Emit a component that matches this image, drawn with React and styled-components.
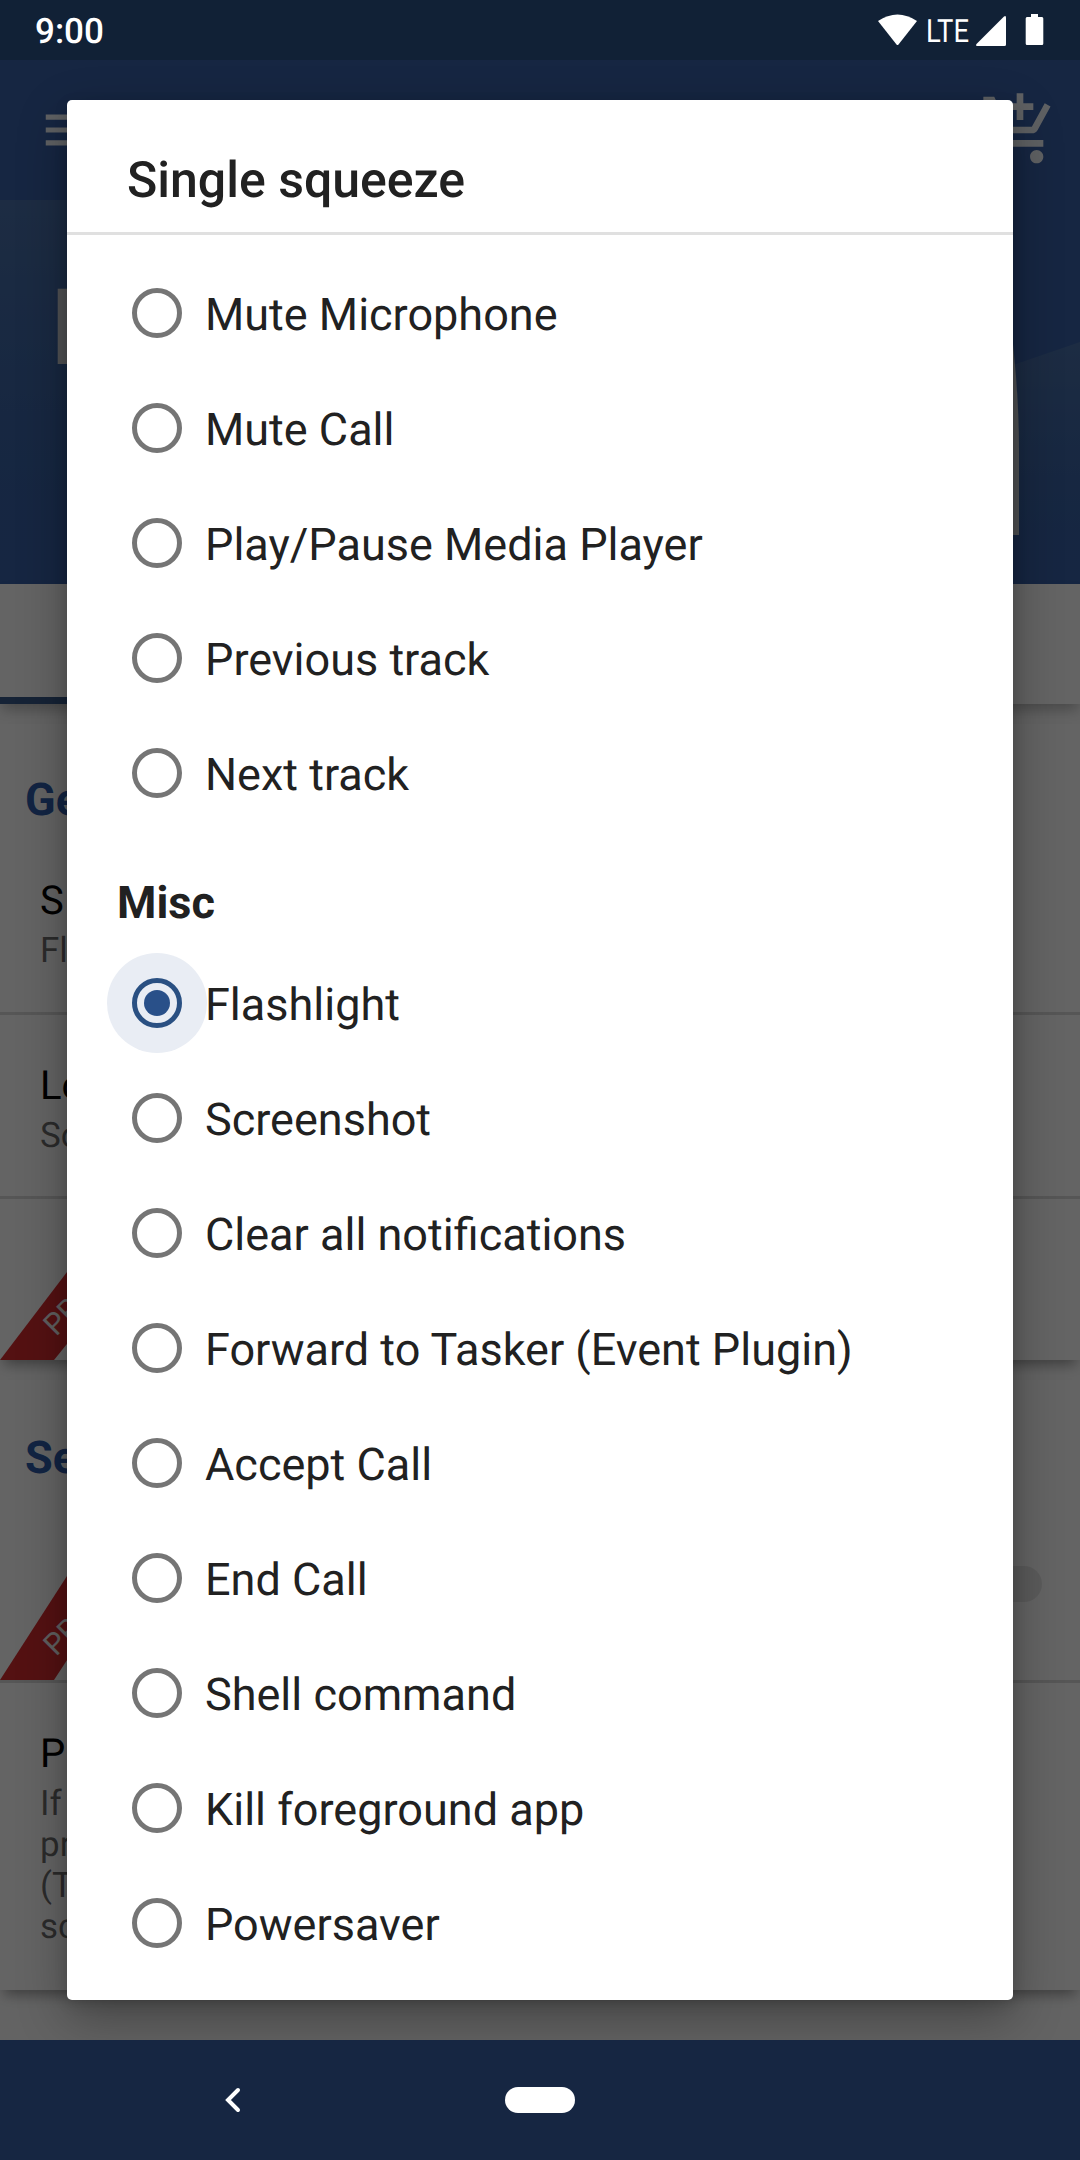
import { useState } from "react";
import styled, { createGlobalStyle } from "styled-components";
import { MdAddShoppingCart, MdMenu } from "react-icons/md";

const GlobalStyle = createGlobalStyle`
    * {
        box-sizing: border-box;
    }

    body {
        margin: 0;
        font-family: Roboto, "Liberation Sans", sans-serif;
        background: #162642;
        text-rendering: geometricPrecision;
    }
`;

const Phone = styled.div`
    display: flex;
    flex-direction: column;
    width: 1080px;
    height: 2160px;
    overflow: hidden;
`;

const StatusBar = styled.header`
    display: flex;
    flex: none;
    height: 60px;
    align-items: center;
    justify-content: space-between;
    padding: 0 36px 0 35px;
    background: #112136;
    color: #ffffff;
`;

const Clock = styled.span`
    font-size: 35px;
    line-height: 60px;
    font-weight: 500;
    padding-top: 3px;
`;

const StatusIcons = styled.svg`
    display: block;
    width: 168px;
    height: 60px;
    fill: #ffffff;
    font-family: Roboto, sans-serif;
    font-size: 32px;
`;

const Stage = styled.div`
    position: relative;
    flex: 1;
    overflow: hidden;
    background: #f8f8f8;
`;

const AppBar = styled.div`
    display: flex;
    height: 140px;
    align-items: center;
    justify-content: space-between;
    padding: 0 20px 0 38px;
    background: #375fa5;
    color: #eef2f8;
`;

const Banner = styled.div`
    display: flex;
    position: relative;
    height: 384px;
    padding: 66px 0 0 49px;
    background: #375fa5;
    color: #cdd0d4;
`;

const BannerArt = styled.svg`
    position: absolute;
    inset: 0;
    width: 1080px;
    height: 384px;
`;

const BannerTitle = styled.div`
    position: relative;
    font-size: 106px;
    line-height: 124px;
`;

const Tabs = styled.div`
    position: relative;
    display: flex;
    height: 120px;
    background: #fafafa;
    box-shadow: 0 8px 12px -2px rgba(0, 0, 0, 0.25);
`;

const ActiveTab = styled.div`
    width: 540px;
    border-bottom: 7px solid #375887;
`;

const Section = styled.section`
    margin-top: 20px;
    background: #fafafa;
    box-shadow: 0 9px 12px -4px rgba(0, 0, 0, 0.35);
`;

const SectionTitle = styled.h2`
    height: ${props => props.$height}px;
    margin: 0;
    padding: ${props => props.$height - 57}px 0 0 25px;
    color: #2d5ba8;
    font-size: 45px;
    line-height: 53px;
    font-weight: 700;
`;

const Setting = styled.div`
    display: flex;
    height: ${props => props.$height}px;
    justify-content: ${props => (props.$end ? "flex-end" : "flex-start")};
    align-items: ${props => (props.$end ? "center" : "flex-start")};
    border-bottom: ${props => (props.$last ? "none" : "3px solid #d8d8d8")};
`;

const SettingText = styled.div`
    padding: 47px 0 0 40px;
`;

const SettingName = styled.div`
    color: #000000;
    font-size: 40px;
    line-height: 48px;
`;

const SettingSummary = styled.div`
    padding-top: 5px;
    color: rgba(0, 0, 0, 0.58);
    font-size: 35px;
    line-height: 41px;
    white-space: pre-line;
`;

const Ribbon = styled.svg`
    display: block;
    width: 160px;
    height: 100%;
    margin-right: auto;
    fill: #d22b2e;

    text {
        fill: #eeeeee;
        font-family: Roboto, sans-serif;
        font-size: 30px;
    }
`;

const Toggle = styled.div`
    width: 90px;
    height: 36px;
    margin-right: 38px;
    border-radius: 18px;
    background: #e4e4e4;
`;

const Scrim = styled.div`
    position: absolute;
    inset: 0;
    padding: 40px 67px;
    background: rgba(0, 0, 0, 0.6);
`;

const Dialog = styled.div`
    height: 1900px;
    border-radius: 5px;
    background: #ffffff;
    color: #212121;
    box-shadow: 0 18px 50px rgba(0, 0, 0, 0.32), 0 4px 14px rgba(0, 0, 0, 0.12);
`;

const DialogTitle = styled.h1`
    height: 135px;
    margin: 0;
    padding: 52px 60px 0;
    border-bottom: 3px solid #e0e0e0;
    font-size: 50px;
    line-height: 58px;
    font-weight: 500;
`;

const Options = styled.div`
    display: flex;
    flex-direction: column;
    padding: 20px 50px;
`;

const GroupName = styled.div`
    height: 115px;
    padding-top: 46px;
    font-size: 45px;
    line-height: 53px;
    font-weight: 700;
`;

const Option = styled.div`
    display: flex;
    height: 115px;
    align-items: center;
    cursor: pointer;
`;

const RadioArea = styled.div`
    display: flex;
    flex: none;
    width: 100px;
    height: 100px;
    margin: 0 -2px 0 -10px;
    align-items: center;
    justify-content: center;
    border-radius: 50%;
    background: ${props => (props.$checked ? "#e9edf4" : "transparent")};
`;

const Radio = styled.div`
    display: flex;
    width: 50px;
    height: 50px;
    align-items: center;
    justify-content: center;
    border: 5px solid ${props => (props.$checked ? "#2a5082" : "#757575")};
    border-radius: 50%;
`;

const RadioDot = styled.div`
    width: 26px;
    height: 26px;
    border-radius: 50%;
    background: #295089;
`;

const OptionLabel = styled.span`
    padding-top: 3px;
    font-size: 45px;
    line-height: 53px;
    white-space: nowrap;
`;

const NavBar = styled.nav`
    display: grid;
    flex: none;
    grid-template-columns: 465px 150px 465px;
    height: 120px;
    align-items: center;
    justify-items: center;
    background: #162642;
`;

const BackIcon = styled.svg`
    width: 30px;
    height: 30px;
    fill: none;
    stroke: #ffffff;
    stroke-width: 4;
    stroke-linecap: round;
`;

const HomePill = styled.div`
    width: 70px;
    height: 26px;
    border-radius: 13px;
    background: #ffffff;
`;

const groups = [
    {
        name: "",
        options: ["Mute Microphone", "Mute Call", "Play/Pause Media Player", "Previous track", "Next track"],
    },
    {
        name: "Misc",
        options: [
            "Flashlight",
            "Screenshot",
            "Clear all notifications",
            "Forward to Tasker (Event Plugin)",
            "Accept Call",
            "End Call",
            "Shell command",
            "Kill foreground app",
            "Powersaver",
        ],
    },
];

const ProRibbon = ({ height }) => (
    <Ribbon viewBox={`0 0 160 ${height}`} preserveAspectRatio="none">
        <path d={`M0 ${height} L67 ${height - (height > 170 ? 104 : 88)} L160 0 V30 L54 ${height} Z`} />
        <text transform={`translate(56 ${height - 23}) rotate(-45)`}>PR</text>
    </Ribbon>
);

const Settings = () => (
    <>
        <AppBar>
            <MdMenu size={62} />
            <MdAddShoppingCart size={80} />
        </AppBar>
        <Banner>
            <BannerArt viewBox="0 0 1080 384">
                <defs>
                    <linearGradient id="fade" x1="0" y1="0" x2="0" y2="1">
                        <stop offset="0" stopColor="#4e73a8" stopOpacity="0.8" />
                        <stop offset="0.75" stopColor="#426ba0" stopOpacity="0.1" />
                        <stop offset="1" stopColor="#426ba0" stopOpacity="0" />
                    </linearGradient>
                </defs>
                <path fill="url(#fade)" d="M0 0 H300 L200 384 H0 Z" />
                <path fill="url(#fade)" d="M900 204 L1080 142 V384 H900 Z" />
                <path fill="#c8ccd2" d="M900 144 H1013 Q1019 200 1019 250 V335 H900 Z" />
            </BannerArt>
            <BannerTitle>E</BannerTitle>
        </Banner>
        <Tabs>
            <ActiveTab />
        </Tabs>
        <Section>
            <SectionTitle $height={106}>Ge</SectionTitle>
            <Setting $height={185}>
                <SettingText>
                    <SettingName>S</SettingName>
                    <SettingSummary>Fl</SettingSummary>
                </SettingText>
            </Setting>
            <Setting $height={184}>
                <SettingText>
                    <SettingName>Lo</SettingName>
                    <SettingSummary>Sc</SettingSummary>
                </SettingText>
            </Setting>
            <Setting $height={161} $last>
                <ProRibbon height={161} />
            </Setting>
        </Section>
        <Section>
            <SectionTitle $height={108}>Se</SectionTitle>
            <Setting $height={195} $end>
                <ProRibbon height={192} />
                <Toggle />
            </Setting>
            <Setting $height={307} $last>
                <SettingText>
                    <SettingName>P</SettingName>
                    <SettingSummary>{"If\npr\n(T\nsc"}</SettingSummary>
                </SettingText>
            </Setting>
        </Section>
    </>
);

const App = () => {
    const [selected, setSelected] = useState("Flashlight");

    return (
        <Phone>
            <GlobalStyle />
            <StatusBar>
                <Clock>9:00</Clock>
                <StatusIcons viewBox="876 0 168 60">
                    <path d="M878 21 Q897.5 8 917 21 L898.5 44.5 Q897.5 45.5 896.5 44.5 Z" />
                    <text x="926" y="41.5" textLength="43" lengthAdjust="spacingAndGlyphs">LTE</text>
                    <path d="M976.5 44 L1004 16.5 Q1006 15 1006 17.5 V44.5 Q1006 46 1004.500 46 H978 Q975 46 976.5 44 Z" />
                    <path d="M1031 14 H1038 V17 H1042 Q1043.300 17 1043.300 18.500 V43.500 Q1043.300 45 1042 45 H1027 Q1025.700 45 1025.700 43.500 V18.500 Q1025.700 17 1027 17 H1031 Z" />
                </StatusIcons>
            </StatusBar>
            <Stage>
                <Settings />
                <Scrim>
                    <Dialog>
                        <DialogTitle>Single squeeze</DialogTitle>
                        <Options>
                            {groups.map(group => (
                                <div key={group.name}>
                                    {group.name && <GroupName>{group.name}</GroupName>}
                                    {group.options.map(option => (
                                        <Option key={option} onClick={() => setSelected(option)}>
                                            <RadioArea $checked={option === selected}>
                                                <Radio $checked={option === selected}>
                                                    {option === selected && <RadioDot />}
                                                </Radio>
                                            </RadioArea>
                                            <OptionLabel>{option}</OptionLabel>
                                        </Option>
                                    ))}
                                </div>
                            ))}
                        </Options>
                    </Dialog>
                </Scrim>
            </Stage>
            <NavBar>
                <BackIcon viewBox="0 0 30 30">
                    <path d="M20 5 L10 15 L20 25" />
                </BackIcon>
                <HomePill />
            </NavBar>
        </Phone>
    );
};

export default App;
